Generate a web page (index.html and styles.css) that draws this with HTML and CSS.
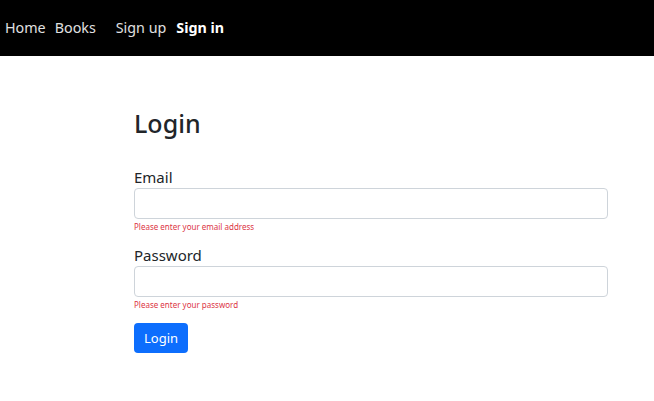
FILE: index.html
```html
<!DOCTYPE html>
<html>
<head>
<meta charset="utf-8">
<link rel="stylesheet" href="styles.css">
</head>
<body>
<nav class="navbar">
  <a class="nav-link" href="#">Home</a>
  <a class="nav-link" href="#">Books</a>
  <a class="nav-link spaced" href="#">Sign up</a>
  <a class="nav-link active" href="#">Sign in</a>
</nav>
<main class="container">
  <h2 class="title">Login</h2>
  <form class="form">
    <div class="field">
      <label class="label">Email</label>
      <input class="input" type="email">
      <div class="error">Please enter your email address</div>
    </div>
    <div class="field">
      <label class="label">Password</label>
      <input class="input" type="password">
      <div class="error">Please enter your password</div>
    </div>
    <button class="btn" type="button">Login</button>
  </form>
</main>
</body>
</html>
```
FILE: styles.css
```css
* { box-sizing: border-box; }
body {
  margin: 0;
  font-family: "Noto Sans", "Open Sans", sans-serif;
  color: #212529;
  background: #fff;
}
.navbar {
  height: 56px;
  background: #000;
  display: flex;
  align-items: center;
  padding-left: 5px;
  padding-bottom: 2px;
}
.nav-link {
  color: #e0e0e0;
  text-decoration: none;
  font-size: 14.3px;
  margin-right: 9px;
}
.nav-link.spaced { margin-left: 11px; }
.nav-link.active { color: #fff; font-weight: 700; margin-left: 1px; }
.container {
  margin-left: 134px;
  width: 474px;
  padding-top: 52px;
}
.title {
  margin: 0 0 29px;
  font-size: 25px;
  font-weight: 500;
  line-height: 1.2;
}
.field { margin-bottom: 12px; }
.label {
  display: block;
  font-size: 15px;
  line-height: 20px;
  margin-bottom: 1px;
}
.input {
  display: block;
  width: 100%;
  height: 31px;
  border: 1px solid #ced4da;
  border-radius: 4px;
  margin: 0;
}
.error {
  color: #dc3545;
  font-size: 8px;
  line-height: 12px;
  margin-top: 2px;
}
.btn {
  background: #0d6efd;
  color: #fff;
  border: none;
  border-radius: 4px;
  height: 30px;
  padding: 0 10px;
  font-family: inherit;
  font-size: 13px;
}
```
